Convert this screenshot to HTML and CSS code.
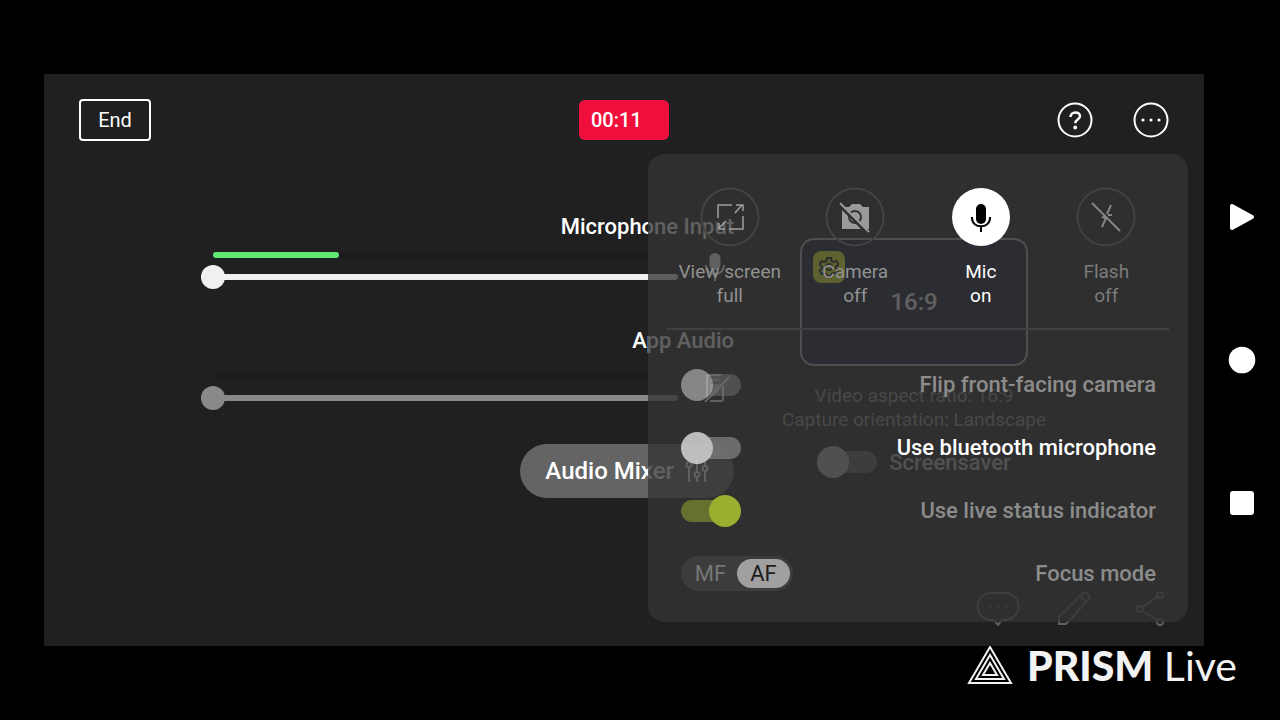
FILE: index.html
```html
<!DOCTYPE html>
<html lang="en">
<head>
  <meta charset="UTF-8" />
  <meta name="viewport" content="width=device-width, initial-scale=1" />
  <title>PRISM Live</title>
  <link rel="stylesheet" href="styles.css">
</head>
<body>
  <div class="device">
    <main class="screen">
      <header class="top-bar">
        <button class="end-button">End</button>
        <div class="timer">00:11</div>
        <div class="top-icons">
          <button class="icon-button" aria-label="Help">
            <svg width="36" height="36" viewBox="0 0 36 36" fill="none" stroke="#fff" stroke-width="2">
              <circle cx="18" cy="18" r="16.5" />
              <path d="M13.5 15c0-6 9.500-6 9.500-.8 0 3.400-4.700 3.400-4.700 7" stroke-width="2.500" />
              <circle cx="18.200" cy="25.500" r="1.900" fill="#fff" stroke="none" />
            </svg>
          </button>
          <button class="icon-button" aria-label="More">
            <svg width="36" height="36" viewBox="0 0 36 36">
              <circle cx="18" cy="18" r="16.5" fill="none" stroke="#fff" stroke-width="2" />
              <g fill="#fff"><circle cx="10" cy="18" r="1.6" /><circle cx="18" cy="18" r="1.6" /><circle cx="26" cy="18" r="1.6" /></g>
            </svg>
          </button>
        </div>
      </header>

      <div class="content">
        <section class="audio">
          <div class="channel">
            <label class="title" for="micInput">Microphone Input</label>
            <div class="channel-row">
              <div class="levels">
                <div class="level"><div class="level-fill" style="width: 27%"></div></div>
                <input class="slider" type="range" id="micInput" min="0" max="100" value="0" />
              </div>
              <svg width="30" height="30" viewBox="0 0 30 30" fill="none" stroke="#fff" stroke-width="2">
                <rect x="9.500" y="1" width="11" height="17" rx="5.500" fill="#fff" stroke="none" />
                <path d="M6 13c0 12 18 12 18 0M15 22v7" />
              </svg>
            </div>
          </div>

          <div class="channel app-audio">
            <label class="title" for="appAudio">App Audio</label>
            <div class="channel-row">
              <div class="levels">
                <div class="level"></div>
                <input class="slider" type="range" id="appAudio" min="0" max="100" value="0" />
              </div>
              <svg width="30" height="30" viewBox="0 0 30 30" fill="none" stroke="#fff" stroke-width="2">
                <path d="M23 13v13q0 2-2 2H10M7 24V4q0-2 2-2h12" />
                <path d="M11 7h8M11 12h7v6l-7 5z" fill="#aaa" stroke="#aaa" />
                <path d="M29 4L5 29" />
              </svg>
            </div>
          </div>

          <button class="mixer-button">Audio Mixer
            <svg width="24" height="24" viewBox="0 0 24 24" fill="none" stroke="#fff" stroke-width="2">
              <path d="M4 1v2M4 8v15M12 1v12M12 18v5M20 1v6M20 12v11" />
              <circle cx="4" cy="5.500" r="2.500" /><circle cx="12" cy="15.500" r="2.500" /><circle cx="20" cy="9.500" r="2.500" />
            </svg>
          </button>
        </section>

        <section class="capture">
          <div class="preview">
            <button class="settings" aria-label="Video settings">
              <svg width="20" height="20" viewBox="0 0 20 20" fill="none" stroke="#222" stroke-width="2">
                <path d="M8 1h4l.5 3 2 1 3-1 2 3.500-2.500 2v2l2.500 2-2 3.500-3-1-2 1-.5 2H8l-.5-2-2-1-3 1-2-3.500 2.500-2v-2L.5 7.500l2-3.500 3 1 2-1z" />
                <circle cx="10" cy="10" r="3" />
              </svg>
            </button>
            <span class="ratio">16:9</span>
          </div>
          <p class="capture-info">Video aspect ratio: 16:9<br>Capture orientation: Landscape</p>
          <div class="screensaver">
            <input class="toggle" type="checkbox" id="screensaver" />
            <label for="screensaver">Screensaver</label>
          </div>
        </section>
      </div>

      <footer class="tools">
        <button class="icon-button" aria-label="Chat">
          <svg width="44" height="38" viewBox="0 0 44 38">
            <path d="M15 3h14a13 13 0 0 1 0 27h-3l-4 5-4-5h-3a13 13 0 0 1 0-27z" />
            <path d="M13 17h2M21 17h2M29 17h2" />
          </svg>
        </button>
        <button class="icon-button" aria-label="Draw">
          <svg width="44" height="38" viewBox="0 0 44 38">
            <path d="M7 34v-7L30 4q3-3 6 0t0 6L14 34zM28 6l6 6" />
          </svg>
        </button>
        <button class="icon-button" aria-label="Share">
          <svg width="44" height="38" viewBox="0 0 44 38">
            <circle cx="32" cy="5" r="3" /><circle cx="12" cy="19" r="3" /><circle cx="32" cy="32" r="3" />
            <path d="M15 17L29 7M15 21l14 9" />
          </svg>
        </button>
      </footer>

      <!-- Menu opened by the more button -->
      <div class="menu">
        <div class="actions">
          <button class="action">
            <svg width="58" height="58" viewBox="0 0 58 58" fill="none" stroke="#a0a0a0" stroke-width="2">
              <circle cx="29" cy="29" r="28.5" stroke="#444" />
              <path d="M31 17H17v13M42 28v13H28M34 25l7-8M35 17h7v6M25 33l-7 7M18 35v6h6" stroke-width="1.500" />
            </svg>
            View screen<br>full
          </button>
          <button class="action">
            <svg width="58" height="58" viewBox="0 0 58 58" fill="none">
              <circle cx="29" cy="29" r="28.5" stroke="#444" stroke-width="2" />
              <path d="M16 19h7l3-3h8l3 3h6v22H16z" fill="#9a9a9a" />
              <circle cx="29" cy="29" r="6" stroke="#333" stroke-width="2" />
              <path d="M12 16l29 29" stroke="#303030" stroke-width="3" />
              <path d="M14 15l29 29" stroke="#9a9a9a" stroke-width="2" />
            </svg>
            Camera<br>off
          </button>
          <button class="action active">
            <svg width="58" height="58" viewBox="0 0 58 58" fill="none" stroke="#000" stroke-width="2">
              <circle cx="29" cy="29" r="29" fill="#fff" stroke="none" />
              <rect x="24" y="16" width="10" height="20" rx="5" fill="#000" stroke="none" />
              <path d="M20 29v1c0 11 18 11 18 0v-1M29 38v6" />
            </svg>
            Mic<br>on
          </button>
          <button class="action disabled">
            <svg width="58" height="58" viewBox="0 0 58 58" fill="none" stroke="#858585" stroke-width="2">
              <circle cx="29" cy="29" r="28.5" stroke="#424242" />
              <path d="M34 17l-4 9M31 27h4M25 29l4 1-4 9M15 15l28 28" />
            </svg>
            Flash<br>off
          </button>
        </div>

        <div class="options">
          <div class="option">
            <input class="toggle" type="checkbox" id="flip" />
            <label for="flip">Flip front-facing camera</label>
          </div>
          <div class="option enabled">
            <input class="toggle" type="checkbox" id="bluetooth" />
            <label for="bluetooth">Use bluetooth microphone</label>
          </div>
          <div class="option">
            <input class="toggle" type="checkbox" id="indicator" checked />
            <label for="indicator">Use live status indicator</label>
          </div>
          <div class="option" role="radiogroup" aria-labelledby="focusLabel">
            <div class="segment">
              <label><input type="radio" name="focus" value="mf" />MF</label>
              <label><input type="radio" name="focus" value="af" checked />AF</label>
            </div>
            <span id="focusLabel">Focus mode</span>
          </div>
        </div>
      </div>
    </main>

    <nav class="system-nav">
      <button aria-label="Back">
        <svg width="28" height="28" viewBox="0 0 28 28"><path d="M4 3v22l20-11z" fill="#fff" stroke="#fff" stroke-width="4" stroke-linejoin="round" /></svg>
      </button>
      <button aria-label="Home">
        <svg width="28" height="28" viewBox="0 0 28 28"><circle cx="14" cy="14" r="13.300" fill="#fff" /></svg>
      </button>
      <button aria-label="Recent apps">
        <svg width="28" height="28" viewBox="0 0 28 28"><rect x="2" y="2" width="24" height="24" rx="3" fill="#fff" /></svg>
      </button>
    </nav>
  </div>

  <div class="watermark">
    <svg width="46" height="42" viewBox="0 0 46 42" fill="none" stroke="#f2f2f2" stroke-width="2">
      <path d="M23 3L2 39h42zM23 11L9 35h28zM23 19l-7 12h14z" />
    </svg>
    <span><b>PRISM</b> Live</span>
  </div>
</body>
</html>
```
FILE: styles.css
```css
* {
  box-sizing: border-box;
}

body {
  margin: 0;
  min-height: 100vh;
  padding-top: 74px;
  background-color: #000;
  color: #fff;
  font-family: Roboto, sans-serif;
  display: flex;
  flex-direction: column;
}

button {
  padding: 0;
  border: none;
  background: none;
  color: inherit;
  font-family: inherit;
  cursor: pointer;
}

svg {
  display: block;
  flex-shrink: 0;
}

.device {
  flex: 1;
  display: flex;
  padding-left: 44px;
}

.screen {
  position: relative;
  flex: 1;
  display: flex;
  flex-direction: column;
  background-color: #202020;
}

/* top bar */
.top-bar {
  display: grid;
  grid-template-columns: 1fr auto 1fr;
  align-items: center;
  padding: 25px 35px 0;
}

.end-button {
  justify-self: start;
  width: 72px;
  height: 42px;
  border: 2px solid #fff;
  border-radius: 4px;
  font-size: 20px;
}

.timer {
  width: 90px;
  padding: 0 12px;
  border-radius: 6px;
  background-color: #f00f3c;
  font-size: 20px;
  font-weight: 500;
  line-height: 40px;
}

.top-icons {
  justify-self: end;
  display: flex;
  gap: 40px;
}

/* audio and capture columns */
.content {
  display: grid;
  grid-template-columns: 1fr 266px;
  gap: 47px;
  padding: 72px 157px 0;
}

.audio,
.channel {
  display: flex;
  flex-direction: column;
}

.title {
  align-self: flex-end;
  margin-bottom: 11px;
  font-size: 22px;
  font-weight: 500;
  line-height: 28px;
}

.app-audio {
  margin-top: 38px;
}

.app-audio .title {
  margin-bottom: 18px;
}

.channel-row {
  display: flex;
  gap: 22px;
  padding-right: 4px;
}

.levels {
  flex: 1;
  display: flex;
  flex-direction: column;
  gap: 7px;
}

.level {
  height: 6px;
  margin-left: 12px;
  border-radius: 3px;
  background-color: #1c1c1c;
}

.level-fill {
  height: 100%;
  border-radius: 3px;
  background-color: #5eea75;
}

.slider {
  appearance: none;
  width: 100%;
  height: 24px;
  margin: 0;
  background: none;
  color: #f0f0f0;
}

.app-audio .slider {
  color: #8a8888;
}

.slider::-webkit-slider-runnable-track {
  height: 6px;
  border-radius: 3px;
  background-color: currentColor;
}

.slider::-webkit-slider-thumb {
  appearance: none;
  width: 24px;
  height: 24px;
  margin-top: -9px;
  border-radius: 50%;
  background-color: currentColor;
}

.mixer-button {
  align-self: flex-end;
  display: flex;
  align-items: center;
  gap: 11px;
  height: 54px;
  margin-top: 34px;
  padding: 0 25px;
  border-radius: 27px;
  background-color: #646464;
  font-size: 24px;
  font-weight: 500;
}

.capture {
  display: flex;
  flex-direction: column;
  align-items: center;
  padding-top: 25px;
}

.preview {
  display: grid;
  grid-template-columns: 1fr auto 1fr;
  width: 228px;
  height: 128px;
  padding: 11px;
  border: 2px solid #b0b0b0;
  border-radius: 14px;
  background-color: #0e172d;
}

.settings {
  display: flex;
  align-items: center;
  justify-content: center;
  width: 32px;
  height: 32px;
  border-radius: 8px;
  background-color: #f0ff20;
}

.ratio {
  align-self: center;
  font-size: 24px;
  font-weight: 500;
}

.capture-info {
  margin: 18px 0 0;
  color: #909090;
  font-size: 19px;
  line-height: 24px;
  text-align: center;
  white-space: nowrap;
}

.screensaver {
  display: flex;
  align-items: center;
  gap: 12px;
  margin-top: 14px;
  color: #b8b8b8;
  font-size: 22px;
  font-weight: 500;
  --thumb: #b8b8b8;
  --track: #606060;
}

.toggle {
  appearance: none;
  display: flex;
  align-items: center;
  width: 60px;
  height: 32px;
  margin: 0;
  isolation: isolate;
}

.toggle::before {
  content: "";
  width: 32px;
  height: 32px;
  border-radius: 50%;
  background-color: var(--thumb);
}

.toggle::after {
  content: "";
  z-index: -1;
  width: 56px;
  height: 22px;
  margin-left: -28px;
  border-radius: 11px;
  background-color: var(--track);
}

.toggle:checked {
  flex-direction: row-reverse;
}

.toggle:checked::after {
  margin: 0 -28px 0 0;
}

.tools {
  display: flex;
  justify-content: flex-end;
  gap: 32px;
  margin-top: auto;
  padding: 0 32px 18px;
}

.tools svg {
  fill: none;
  stroke: #606060;
  stroke-width: 2;
}

/* menu over the screen */
.menu {
  position: absolute;
  top: 80px;
  right: 16px;
  width: 540px;
  padding: 34px 19px 17px;
  border-radius: 16px;
  background-color: rgba(51, 51, 51, 0.78);
}

.actions {
  display: grid;
  grid-template-columns: repeat(4, 1fr);
  padding-bottom: 20px;
  border-bottom: 2px solid #414141;
}

.action {
  display: flex;
  flex-direction: column;
  align-items: center;
  color: #929292;
  font-size: 19px;
  line-height: 24px;
}

.action svg {
  margin-bottom: 14px;
  overflow: visible;
}

.action.active {
  color: #fff;
}

.action.disabled {
  color: #7c7c7c;
}

.options {
  padding: 23px 13px 0 14px;
}

.option {
  display: flex;
  align-items: center;
  justify-content: space-between;
  height: 63px;
  color: #8c8c8c;
  font-size: 22px;
  font-weight: 500;
  --thumb: #ddd;
  --track: #717171;
}

.option .toggle {
  opacity: 0.5;
}

.option.enabled {
  color: #fff;
  --thumb: #dfdfdf;
  --track: #7b7b7b;
}

.option.enabled .toggle {
  opacity: 0.8;
}

.option .toggle:checked {
  opacity: 1;
  --thumb: #9aae30;
  --track: #65722f;
}

.segment {
  display: flex;
  padding: 3px;
  border-radius: 18px;
  background-color: #3c3c3c;
  color: #777;
  font-weight: 400;
}

.segment label {
  width: 53px;
  border-radius: 15px;
  line-height: 29px;
  text-align: center;
}

.segment label:has(:checked) {
  background-color: #a0a0a0;
  color: #1c1c1c;
}

.segment input {
  appearance: none;
  position: absolute;
  margin: 0;
}

/* system buttons on the right edge */
.system-nav {
  width: 76px;
  display: flex;
  flex-direction: column;
  align-items: center;
  justify-content: center;
}

.system-nav button {
  height: 143px;
}

.watermark {
  display: flex;
  align-items: center;
  justify-content: flex-end;
  gap: 14px;
  height: 74px;
  padding: 0 43px 36px 0;
  color: #f2f2f2;
  font-family: Lato, sans-serif;
  font-size: 41px;
}

.watermark b {
  font-family: "Lato Black", Lato, sans-serif;
  font-weight: 900;
}
```
